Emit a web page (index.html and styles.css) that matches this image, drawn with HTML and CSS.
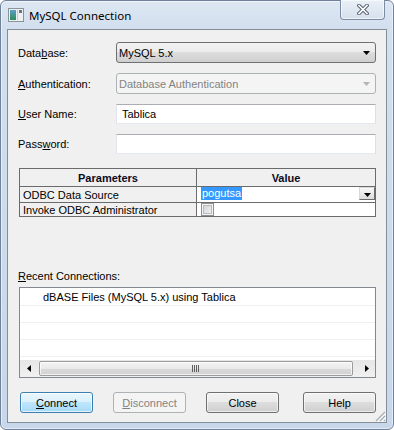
FILE: index.html
```html
<!DOCTYPE html>
<html>
<head>
    <meta charset="utf-8">
    <title>MySQL Connection</title>
    <link rel="stylesheet" href="styles.css">
</head>
<body>

<div class="window">
    <div class="titlebar">
        <svg class="app-icon" width="16" height="14" viewBox="0 0 16 14">
            <defs>
                <linearGradient id="iconfill" x1="0" y1="0" x2="0" y2="1">
                    <stop offset="0" stop-color="#5d9fc9"/>
                    <stop offset="1" stop-color="#2e8c5a"/>
                </linearGradient>
            </defs>
            <rect x="0.5" y="0.5" width="15" height="13" fill="#eef1f4" stroke="#8c9299"/>
            <rect x="2" y="2" width="6" height="10" fill="url(#iconfill)"/>
            <rect x="9" y="2" width="1" height="10" fill="#c3c8ce"/>
            <rect x="11" y="2" width="3" height="3" fill="#6b7682"/>
        </svg>
        <span class="title">MySQL Connection</span>
        <div class="close-btn">
            <svg width="12" height="11" viewBox="0 0 12 11">
                <path d="M2 1.5 L10 9.5 M10 1.5 L2 9.5" stroke="#56606e" stroke-width="3.6" stroke-linecap="square"/>
                <path d="M2 1.5 L10 9.5 M10 1.5 L2 9.5" stroke="#fff" stroke-width="1.6" stroke-linecap="square"/>
            </svg>
        </div>
    </div>

    <div class="client">
        <div class="fields">
            <label>Data<u>b</u>ase:</label>
            <div class="combo">
                <span class="combo-value">MySQL 5.x</span>
                <svg class="combo-arrow" width="7" height="4" viewBox="0 0 7 4"><path d="M0 0h7L3.5 4z" fill="#000"/></svg>
            </div>

            <label><u>A</u>uthentication:</label>
            <div class="combo disabled">
                <span class="combo-value">Database Authentication</span>
                <svg class="combo-arrow" width="7" height="4" viewBox="0 0 7 4"><path d="M0 0h7L3.5 4z" fill="#b4b4b4"/></svg>
            </div>

            <label><u>U</u>ser Name:</label>
            <div class="textbox">Tablica</div>

            <label>Pass<u>w</u>ord:</label>
            <div class="textbox"></div>
        </div>

        <div class="params">
            <div class="cell head">Parameters</div>
            <div class="cell head">Value</div>

            <div class="cell name">ODBC Data Source</div>
            <div class="cell value">
                <span class="selected">pogutsa</span>
                <span class="mini-drop">
                    <svg width="7" height="4" viewBox="0 0 7 4"><path d="M0 0h7L3.5 4z" fill="#000"/></svg>
                </span>
            </div>

            <div class="cell name">Invoke ODBC Administrator</div>
            <div class="cell value">
                <span class="checkbox"></span>
            </div>
        </div>

        <div class="recent-label"><u>R</u>ecent Connections:</div>
        <div class="listbox">
            <div class="list-rows">
                <div class="list-row">dBASE Files (MySQL 5.x) using Tablica</div>
                <div class="list-row"></div>
                <div class="list-row"></div>
                <div class="list-row"></div>
            </div>
            <div class="hscroll">
                <div class="sb-btn">
                    <svg width="4" height="7" viewBox="0 0 4 7"><path d="M4 0v7L0 3.5z" fill="#000"/></svg>
                </div>
                <div class="sb-thumb">
                    <svg width="8" height="7" viewBox="0 0 8 7">
                        <path d="M0.5 0v7M2.5 0v7M4.5 0v7M6.5 0v7" stroke="#5e5e5e"/>
                    </svg>
                </div>
                <div class="sb-btn">
                    <svg width="4" height="7" viewBox="0 0 4 7"><path d="M0 0v7L4 3.5z" fill="#000"/></svg>
                </div>
            </div>
        </div>

        <div class="buttons">
            <button class="btn default"><u>C</u>onnect</button>
            <button class="btn" disabled><u>D</u>isconnect</button>
            <button class="btn">Close</button>
            <button class="btn help">Help</button>
        </div>

        <svg class="size-grip" width="11" height="11" viewBox="0 0 11 11">
            <path d="M10 1L1 10M10 5L5 10M10 9L9 10" stroke="#a4acb6" stroke-width="1.2"/>
            <path d="M11 2L2 11M11 6L6 11" stroke="#fff" stroke-width="1"/>
        </svg>
    </div>
</div>

</body>
</html>
```

FILE: styles.css
```css
body {
    margin: 0;
    font-family: "Liberation Sans", Arial, sans-serif;
    font-size: 11px;
    color: #000;
    background: #fff;
}

u {
    text-underline-offset: 1px;
}

.window {
    width: 394px;
    height: 430px;
    box-sizing: border-box;
    border: 1px solid #70819a;
    border-radius: 6px;
    background: linear-gradient(to bottom, #dde7f3 0, #d2dfee 28px, #c8d7e9 100%);
    box-shadow: inset 0 0 0 1px rgba(255, 255, 255, .5);
    display: flex;
    flex-direction: column;
}

.titlebar {
    height: 28px;
    display: flex;
    align-items: center;
    padding: 0 8px 0 7px;
}

.app-icon {
    margin-right: 5px;
}

.title {
    font-family: "Noto Sans", "Open Sans", sans-serif;
    font-size: 11.5px;
    color: #000;
}

.close-btn {
    align-self: flex-start;
    margin: -1px 0 0 auto;
    width: 45px;
    height: 20px;
    box-sizing: border-box;
    border: 1px solid #7c8ca2;
    border-top: none;
    border-radius: 0 0 4px 4px;
    background: linear-gradient(to bottom, #eaf0f7, #d6e0ec);
    box-shadow: inset 0 0 0 1px rgba(255, 255, 255, .6);
    display: flex;
    align-items: center;
    justify-content: center;
}

.client {
    flex: 1;
    margin: 0 6px 6px 6px;
    border: 1px solid #848e9a;
    background: #f0f0f0;
    padding: 12px 10px 0 10px;
    position: relative;
    display: flex;
    flex-direction: column;
}

.fields {
    display: grid;
    grid-template-columns: 98px 1fr;
    grid-template-rows: 21px 21px 20px 20px;
    row-gap: 10px;
    align-items: center;
}

.combo {
    height: 21px;
    box-sizing: border-box;
    border: 1px solid #707070;
    border-radius: 3px;
    background: linear-gradient(to bottom, #f2f2f2 0, #ebebeb 50%, #dddddd 50%, #cfcfcf 100%);
    display: flex;
    align-items: center;
    padding: 0 5px 0 2px;
}

.combo-value {
    flex: 1;
}

.combo.disabled {
    border-color: #adb2b5;
    background: #f4f4f4;
    color: #838383;
}

.textbox {
    height: 20px;
    box-sizing: border-box;
    border: 1px solid;
    border-color: #abadb3 #dbdfe6 #e3e9ef #e2e3ea;
    background: #fff;
    padding-left: 5px;
    display: flex;
    align-items: center;
}

.params {
    margin: 14px 0 0 1px;
    display: grid;
    grid-template-columns: 177px 179px;
    grid-template-rows: 18px 16px 14px;
    border-top: 1px solid #6b6b6b;
    border-left: 1px solid #6b6b6b;
}

.cell {
    box-sizing: border-box;
    border-right: 1px solid #6b6b6b;
    border-bottom: 1px solid #6b6b6b;
    display: flex;
    align-items: center;
    white-space: nowrap;
}

.cell.head {
    justify-content: center;
    font-weight: bold;
    color: #0a0a1e;
}

.cell.name {
    padding-left: 3px;
}

.cell.value {
    background: #fff;
    padding-left: 4px;
    align-items: flex-start;
}

.selected {
    background: #3399ff;
    color: #fff;
    line-height: 13px;
    padding: 0 1px;
}

.mini-drop {
    margin-left: auto;
    width: 16px;
    height: 13px;
    box-sizing: border-box;
    border: 1px solid;
    border-color: #d8d8d8 #6a6a6a #6a6a6a #d8d8d8;
    background: linear-gradient(to bottom, #f7f7f7, #dcdcdc);
    display: flex;
    align-items: flex-end;
    justify-content: center;
    padding-bottom: 2px;
}

.checkbox {
    width: 13px;
    height: 13px;
    box-sizing: border-box;
    border: 1px solid #8e8f8f;
    background: linear-gradient(135deg, #cbcfd5, #f6f6f6);
    box-shadow: inset 0 0 0 1px #f4f4f4, inset 0 0 0 2px #b7bcc2;
}

.recent-label {
    margin-top: 53px;
    line-height: 13px;
}

.listbox {
    margin: 4px 0 0 1px;
    height: 91px;
    box-sizing: border-box;
    border: 1px solid #828790;
    background: #fff;
    display: flex;
    flex-direction: column;
}

.list-rows {
    flex: 1;
    padding-top: 1px;
}

.list-row {
    height: 17px;
    box-sizing: border-box;
    border-bottom: 1px solid #f0f0f0;
    padding-left: 23px;
    line-height: 16px;
    white-space: nowrap;
}

.hscroll {
    height: 17px;
    display: flex;
    background: linear-gradient(to bottom, #e6e6e6, #f1f1f1);
}

.sb-btn {
    width: 17px;
    display: flex;
    align-items: center;
    justify-content: center;
}

.sb-thumb {
    flex: 1;
    margin: 1px 5px 1px 2px;
    box-sizing: border-box;
    border: 1px solid #9b9b9b;
    border-radius: 2px;
    background: linear-gradient(to bottom, #f4f4f4 0, #e9e9e9 50%, #d9d9d9 51%, #d2d2d2 100%);
    box-shadow: inset 0 0 0 1px rgba(255, 255, 255, .7);
    display: flex;
    align-items: center;
    justify-content: center;
}

.buttons {
    margin: 14px 0 0 2px;
    display: flex;
}

.btn {
    width: 73px;
    height: 21px;
    box-sizing: border-box;
    padding: 0;
    font-family: "Liberation Sans", Arial, sans-serif;
    font-size: 11px;
    color: #000;
    border: 1px solid #707070;
    border-radius: 3px;
    background: linear-gradient(to bottom, #f2f2f2 0, #ebebeb 50%, #dddddd 50%, #cfcfcf 100%);
    box-shadow: inset 0 0 0 1px rgba(255, 255, 255, .6);
}

.btn + .btn {
    margin-left: 20px;
}

.btn.help {
    margin-left: auto;
}

.btn.default {
    border-color: #3c7fb1;
    background: linear-gradient(to bottom, #eaf6fd 0, #d9f0fc 50%, #bee6fd 50%, #a7d9f5 100%);
    box-shadow: inset 0 0 0 1px rgba(255, 255, 255, .7);
}

.btn:disabled {
    border-color: #adb2b5;
    background: #f4f4f4;
    color: #838383;
    box-shadow: none;
}

.size-grip {
    position: absolute;
    right: 0;
    bottom: 0;
}
```
